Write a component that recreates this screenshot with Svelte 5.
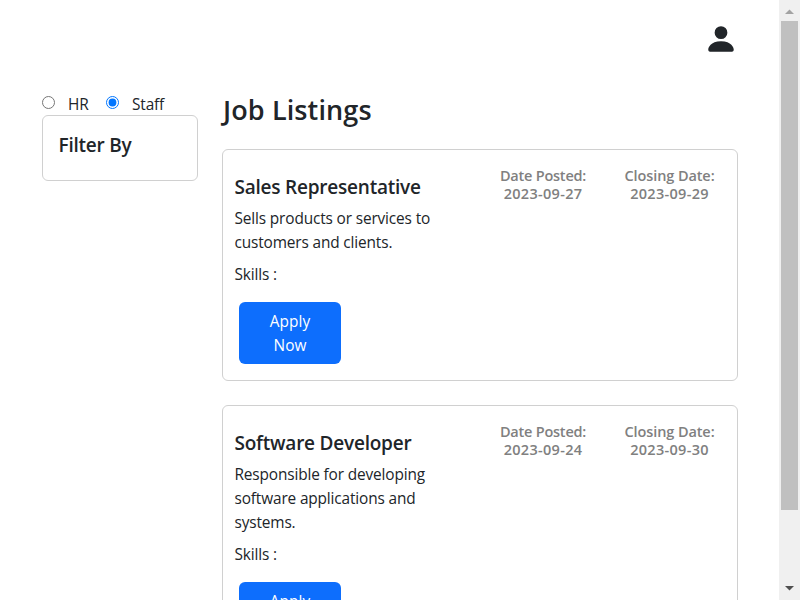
<script>
  const jobs = [
    { title: 'Sales Representative', lines: ['Sells products or services to', 'customers and clients.'], posted: '2023-09-27', closing: '2023-09-29' },
    { title: 'Software Developer', lines: ['Responsible for developing', 'software applications and', 'systems.'], posted: '2023-09-24', closing: '2023-09-30' }
  ];
  let role = $state('staff');
</script>

<div class="window">
  <div class="page">
    <header>
      <svg width="34" height="34" viewBox="0 0 16 16" fill="currentColor" aria-label="Profile">
        <path d="M3 14s-1 0-1-1 1-4 6-4 6 3 6 4-1 1-1 1H3Zm5-6a3 3 0 1 0 0-6 3 3 0 0 0 0 6Z" />
      </svg>
    </header>
    <main>
      <aside>
        <div class="roles">
          <label><input type="radio" name="role" value="hr" bind:group={role} /><span>HR</span></label>
          <label><input type="radio" name="role" value="staff" bind:group={role} /><span>Staff</span></label>
        </div>
        <div class="filter"><h5>Filter By</h5></div>
      </aside>
      <section>
        <h3>Job Listings</h3>
        {#each jobs as job}
          <article>
            <div class="info">
              <h5>{job.title}</h5>
              <p>{#each job.lines as line}<span class="line">{line}</span>{/each}</p>
              <p>Skills :</p>
              <button>Apply<br />Now</button>
            </div>
            <div class="date"><div>Date Posted:</div><div class="value">{job.posted}</div></div>
            <div class="date closing"><div>Closing Date:</div><div class="value">{job.closing}</div></div>
          </article>
        {/each}
      </section>
    </main>
  </div>
  <div class="scrollbar">
    <svg width="21" height="21" viewBox="0 0 21 21"><path d="M6 14h9L10.5 9.5Z" fill="#a3a3a3" /></svg>
    <div class="thumb"></div>
    <svg class="down" width="21" height="21" viewBox="0 0 21 21"><path d="M6 7h9L10.5 11.5Z" fill="#505050" /></svg>
  </div>
</div>

<style>
  :global(body) { margin: 0; overflow: hidden; background: #fff; }
  .window { display: flex; width: 800px; height: 600px; overflow: hidden; color: #212529; font: 400 15.4px/24px "Open Sans", "Noto Sans", sans-serif; letter-spacing: -0.14px; }
  .page { width: 779px; height: 600px; overflow: hidden; box-sizing: border-box; padding: 0 41px 0 42px; }
  header { height: 93px; box-sizing: border-box; padding: 22px 0.5px 0 0; display: flex; justify-content: flex-end; }
  main { display: flex; gap: 24px; }
  aside { width: 156px; flex: none; }
  .roles { display: flex; height: 22px; }
  label { display: flex; height: 22px; line-height: 23px; }
  label:first-child { width: 64px; }
  input { width: 13px; height: 13px; margin: 3px 13px 0 0; accent-color: #0075ff; }
  h3, h5, p { margin: 0; white-space: nowrap; }
  h5 { font-size: 19px; line-height: 24px; font-weight: 600; letter-spacing: -0.22px; }
  h3 { font-size: 27px; line-height: 34px; font-weight: 600; letter-spacing: 0.12px; padding-left: 1px; margin-bottom: 22px; }
  .filter { height: 66px; box-sizing: border-box; padding: 17px 15.5px; border: 1px solid #d0d0d0; border-radius: 6px; }
  section { width: 516px; flex: none; }
  article { display: flex; box-sizing: border-box; border: 1px solid #d0d0d0; border-radius: 6px; padding: 25px 11.5px 16px; margin-bottom: 24px; }
  .info { width: 248px; flex: none; }
  .info h5 { margin-bottom: 8px; }
  p { margin-bottom: 8px; }
  .line { display: block; }
  button { display: block; width: 102px; height: 62px; margin: 15px 0 0 4.5px; padding: 8px 7px 6px; border: 0; border-radius: 6px; background: #0d6efd; color: #fff; font: inherit; letter-spacing: 0.1px; text-align: center; }
  .date { margin-top: -8px; color: #808080; font-size: 14.5px; line-height: 18px; font-weight: 600; letter-spacing: -0.22px; text-align: center; white-space: nowrap; width: 121px; flex: none; }
  .value { letter-spacing: 0.3px; }
  .closing { margin-left: 5.5px; letter-spacing: -0.1px; }
  .scrollbar { width: 21px; height: 600px; flex: none; background: #f0f0f0; display: flex; flex-direction: column; }
  .scrollbar svg { display: block; flex: none; }
  .thumb { width: 17px; height: 489px; margin-left: 2px; background: #c0c0c0; }
  .down { margin-top: auto; }
</style>
